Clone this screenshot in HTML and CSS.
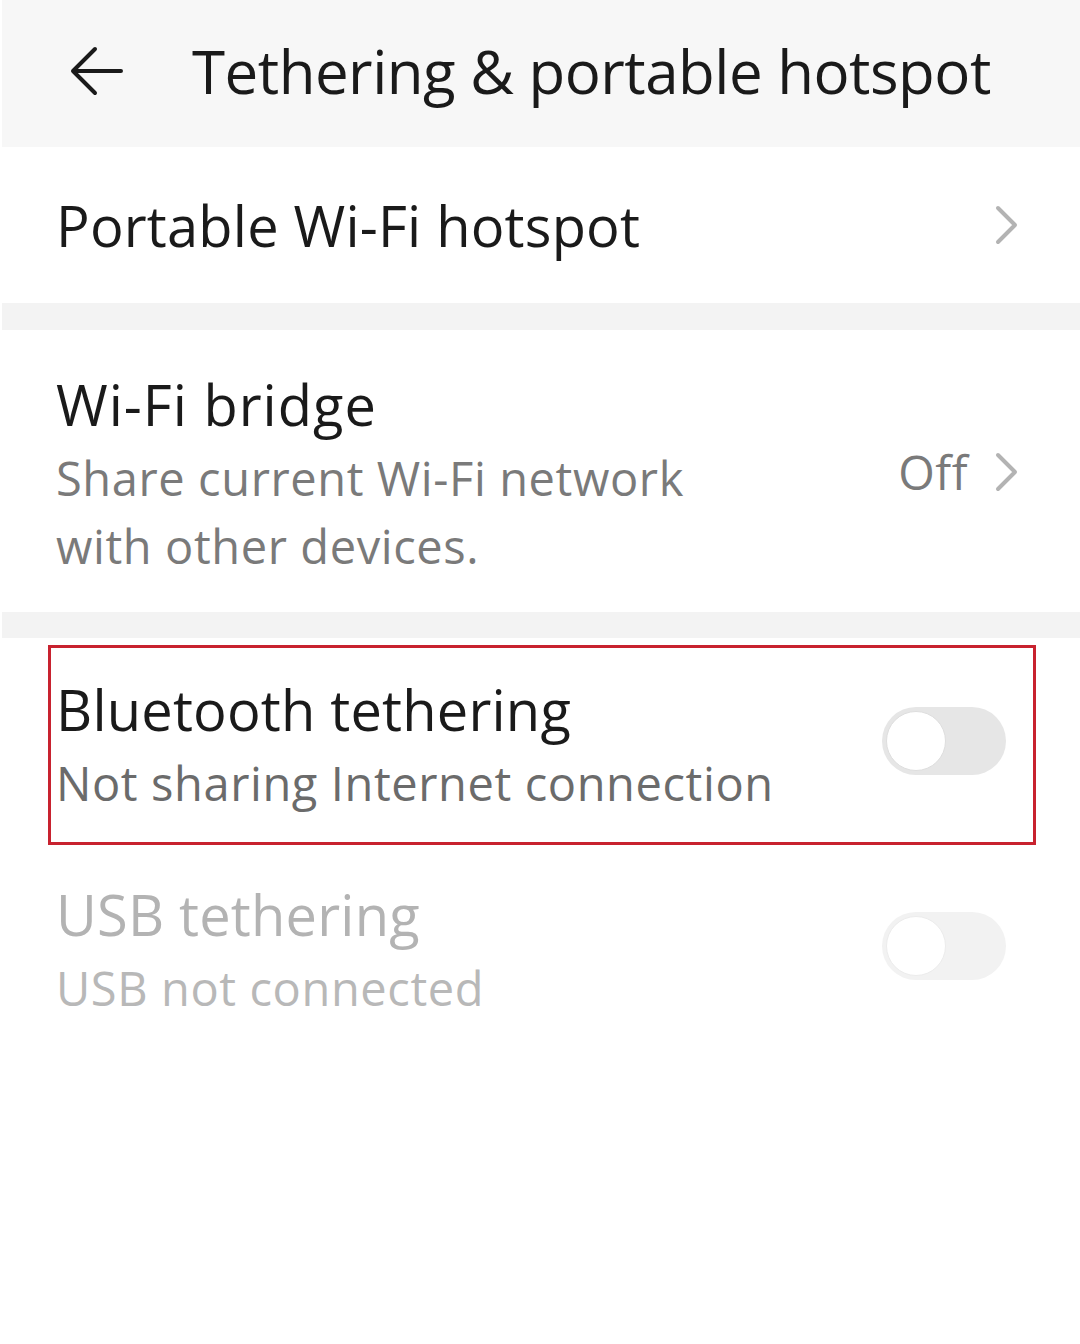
FILE: index.html
```html
<!DOCTYPE html>
<html>
<head>
<meta charset="utf-8">
<link rel="stylesheet" href="styles.css">
</head>
<body>
<div class="page">
  <header class="header">
    <svg class="back" viewBox="0 0 60 60" width="60" height="60">
      <path d="M32 8 L10 30 L32 52 M10 30 L58 30" fill="none" stroke="#1a1a1a" stroke-width="4" stroke-linecap="round" stroke-linejoin="round"/>
    </svg>
    <h1 class="title">Tethering &amp; portable hotspot</h1>
  </header>

  <section class="row row-single">
    <div class="label">Portable Wi-Fi hotspot</div>
    <svg class="chev" viewBox="0 0 24 40" width="24" height="40"><path d="M4 3 L21 20 L4 37" fill="none" stroke="#b3b3b3" stroke-width="4" stroke-linecap="round" stroke-linejoin="round"/></svg>
  </section>

  <div class="gap"></div>

  <section class="row row-bridge">
    <div class="texts">
      <div class="label">Wi-Fi bridge</div>
      <div class="sub">Share current Wi-Fi network<br>with other devices.</div>
    </div>
    <div class="value">
      <span class="off">Off</span>
      <svg class="chev" viewBox="0 0 24 40" width="24" height="40"><path d="M4 3 L21 20 L4 37" fill="none" stroke="#b3b3b3" stroke-width="4" stroke-linecap="round" stroke-linejoin="round"/></svg>
    </div>
  </section>

  <div class="gap gap2"></div>

  <section class="row row-bt">
    <div class="texts">
      <div class="label">Bluetooth tethering</div>
      <div class="sub sub-dark">Not sharing Internet connection</div>
    </div>
    <div class="toggle"><div class="knob"></div></div>
    <div class="highlight"></div>
  </section>

  <section class="row row-usb">
    <div class="texts">
      <div class="label label-dis">USB tethering</div>
      <div class="sub sub-dis">USB not connected</div>
    </div>
    <div class="toggle toggle-dis"><div class="knob"></div></div>
  </section>
</div>
</body>
</html>
```

FILE: styles.css
```css
html, body {
  margin: 0;
  padding: 0;
  background: #ffffff;
}
body {
  width: 1080px;
  height: 1344px;
  overflow: hidden;
  font-family: "Open Sans", "Noto Sans", sans-serif;
  color: #1a1a1a;
}
.page {
  display: flex;
  flex-direction: column;
}
.header {
  height: 147px;
  background: #f7f7f7;
  margin-left: 2px;
  display: flex;
  align-items: center;
  box-sizing: border-box;
  padding-left: 61px;
  padding-bottom: 6px;
}
.back {
  display: block;
  flex: none;
}
.title {
  margin: 0 0 0 69px;
  font-weight: 400;
  font-size: 60px;
  letter-spacing: -0.5px;
  line-height: 1;
  color: #1a1a1a;
}
.row {
  position: relative;
  display: flex;
  align-items: center;
  justify-content: space-between;
  padding: 0 62px 0 56px;
  box-sizing: border-box;
}
.row-single {
  height: 156px;
}
.label {
  font-size: 56px;
  line-height: 1;
  letter-spacing: 0.2px;
  color: #1a1a1a;
}
.sub {
  font-size: 47px;
  line-height: 68px;
  color: #7a7a7a;
  letter-spacing: 0.6px;
}
.sub-dark {
  color: #6b6b6b;
}
.gap {
  height: 27px;
  background: #f3f3f3;
  margin-left: 2px;
}
.gap2 {
  height: 26px;
}
.row-bridge {
  height: 282px;
  padding-top: 14px;
}
.row-bridge .label {
  margin-bottom: 12px;
  letter-spacing: 1px;
}
.value {
  display: flex;
  align-items: center;
  gap: 26px;
  margin-top: -12px;
}
.off {
  font-size: 47px;
  color: #7a7a7a;
  letter-spacing: 0.5px;
}
.chev {
  display: block;
}
.row-bt {
  height: 210px;
  margin-top: 6px;
  padding-right: 74px;
}
.row-bt .label { margin-bottom: 12px; }
.row-bt .toggle { margin-bottom: 16px; }
.highlight {
  position: absolute;
  left: 48px;
  top: 1px;
  width: 988px;
  height: 200px;
  border: 3px solid #c8222f;
  box-sizing: border-box;
}
.toggle {
  width: 124px;
  height: 68px;
  border-radius: 34px;
  background: #e6e6e6;
  position: relative;
  flex: none;
}
.knob {
  position: absolute;
  left: 4px;
  top: 4px;
  width: 60px;
  height: 60px;
  border-radius: 50%;
  background: #ffffff;
  box-sizing: border-box;
  border: 1px solid #dedede;
}
.row-usb {
  height: 190px;
  padding-right: 74px;
  padding-top: 10px;
}
.row-usb .label { margin-bottom: 12px; }
.row-usb .toggle { margin-bottom: 16px; }
.label-dis { color: #b3b3b3; }
.sub-dis { color: #b8b8b8; }
.toggle-dis { background: #f2f2f2; }
.toggle-dis .knob { border-color: #ececec; }
```
